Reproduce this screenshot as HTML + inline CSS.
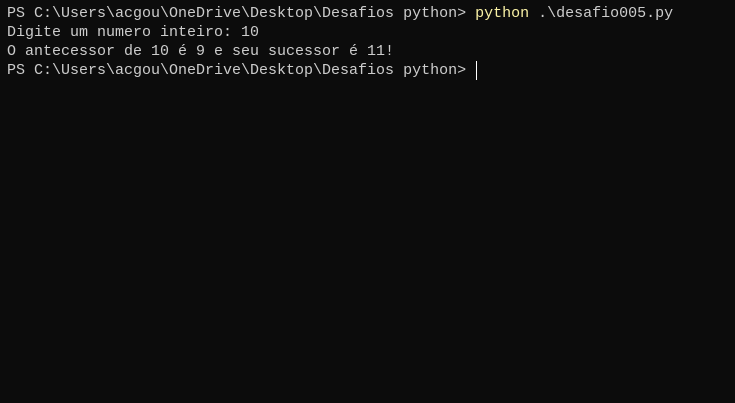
<!DOCTYPE html>
<html><head><meta charset="utf-8"><style>
html,body{margin:0;padding:0;background:#0c0c0c;width:735px;height:403px;overflow:hidden}
pre{margin:0;position:absolute;left:7px;top:4px;font-family:"Liberation Mono","DejaVu Sans Mono",monospace;font-size:15px;line-height:19px;color:#cccccc}
.y{color:#f9f1a5}
.c{display:inline-block;width:1px;height:19px;background:#fff;vertical-align:top;margin-left:1px}
</style></head><body>
<pre>PS C:\Users\acgou\OneDrive\Desktop\Desafios python> <span class="y">python</span> .\desafio005.py
Digite um numero inteiro: 10
O antecessor de 10 é 9 e seu sucessor é 11!
PS C:\Users\acgou\OneDrive\Desktop\Desafios python> <span class="c"></span></pre>
</body></html>
